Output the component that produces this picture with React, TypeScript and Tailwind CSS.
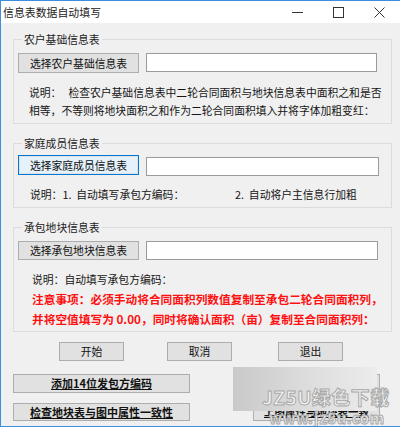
import React from "react";

function Btn({
  children,
  className = "",
}: {
  children: React.ReactNode;
  className?: string;
}) {
  return (
    <div
      className={
        "flex items-center justify-center bg-[#e1e1e1] border border-[#adadad] text-[#111] " +
        className
      }
    >
      {children}
    </div>
  );
}

export default function App() {
  return (
    <div className="w-[400px] h-[429px] bg-white font-['Noto_Sans_CJK_SC',sans-serif] text-[10.8px] text-[#161616] leading-none">
      <div className="relative h-[427px] overflow-hidden bg-[#f0f0f0] border-t border-l border-b border-[#3d8edb]">
        {/* title bar */}
        <div className="flex h-[22px] items-center bg-white">
          <div className="pl-[2px] text-[10.9px] text-[#222]">信息表数据自动填写</div>
          <div className="ml-auto flex h-full">
            <div className="flex w-[41px] items-center justify-center">
              <svg width="11" height="11" viewBox="0 0 11 11">
                <line x1="0" y1="5.5" x2="11" y2="5.5" stroke="#333" strokeWidth="1" />
              </svg>
            </div>
            <div className="flex w-[41px] items-center justify-center">
              <svg width="11" height="11" viewBox="0 0 11 11">
                <rect x="0.5" y="0.5" width="10" height="10" fill="none" stroke="#333" strokeWidth="1" />
              </svg>
            </div>
            <div className="flex w-[41px] items-center justify-center">
              <svg width="11" height="11" viewBox="0 0 11 11">
                <line x1="0.5" y1="0.5" x2="10.5" y2="10.5" stroke="#333" strokeWidth="1" />
                <line x1="10.5" y1="0.5" x2="0.5" y2="10.5" stroke="#333" strokeWidth="1" />
              </svg>
            </div>
          </div>
        </div>

        {/* group 1 */}
        <fieldset className="ml-[12px] mt-[9px] w-[379px] border border-[#dcdcdc] pl-[4px] pb-[4px]">
          <legend className="ml-[4px] h-[14px] px-[2px] leading-[14px] text-[#222]">农户基础信息表</legend>
          <div className="mt-[7px] flex items-start">
            <Btn className="h-[20px] w-[121px]">选择农户基础信息表</Btn>
            <div className="ml-[7px] h-[19px] w-[231px] border border-[#9b9b9b] bg-white" />
          </div>
          <div className="mt-[10px] pl-[11px]">
            <div className="flex h-[18px] items-center whitespace-nowrap">
              <span>说明：</span>
              <span className="ml-[7px]">检查农户基础信息表中二轮合同面积与地块信息表中面积之和是否</span>
            </div>
            <div className="flex h-[18px] items-center whitespace-nowrap">
              相等，不等则将地块面积之和作为二轮合同面积填入并将字体加粗变红：
            </div>
          </div>
        </fieldset>

        {/* group 2 */}
        <fieldset className="ml-[12px] mt-[12px] w-[379px] border border-[#dcdcdc] pl-[4px] pb-[4px]">
          <legend className="ml-[4px] h-[14px] px-[2px] leading-[14px] text-[#222]">家庭成员信息表</legend>
          <div className="mt-[5px] flex items-start">
            <div className="flex h-[20px] w-[121px] items-center justify-center border border-[#0078d7] bg-[#e5f1fb] shadow-[inset_0_0_0_1px_#e1e1e1] text-[#111]">
              选择家庭成员信息表
            </div>
            <div className="ml-[7px] mt-[2px] h-[19px] w-[233px] border border-[#9b9b9b] bg-white" />
          </div>
          <div className="mt-[9px] flex h-[18px] items-center whitespace-nowrap pl-[12px]">
            <span className="w-[205px]">说明：1.&nbsp;&nbsp;自动填写承包方编码：</span>
            <span>2.&nbsp;&nbsp;自动将户主信息行加粗</span>
          </div>
        </fieldset>

        {/* group 3 */}
        <fieldset className="ml-[12px] mt-[12px] w-[379px] border border-[#dcdcdc] pl-[4px] pb-[2px]">
          <legend className="ml-[4px] h-[14px] px-[2px] leading-[14px] text-[#222]">承包地块信息表</legend>
          <div className="mt-[7px] flex items-start">
            <Btn className="h-[19px] w-[121px]">选择承包地块信息表</Btn>
            <div className="ml-[7px] h-[19px] w-[232px] border border-[#9b9b9b] bg-white" />
          </div>
          <div className="mt-[10px] pl-[14px]">
            <div className="flex h-[18px] items-center whitespace-nowrap">说明：自动填写承包方编码：</div>
            <div className="mt-px flex h-[20px] items-center whitespace-nowrap text-[11.7px] font-bold text-[#ff1010]">
              注意事项：必须手动将合同面积列数值复制至承包二轮合同面积列，
            </div>
            <div className="flex h-[20px] items-center whitespace-nowrap text-[11.7px] font-bold text-[#ff1010]">
              并将空值填写为&nbsp;0.00，同时将确认面积（亩）复制至合同面积列：
            </div>
          </div>
        </fieldset>

        {/* action buttons */}
        <div className="mt-[10px] flex">
          <Btn className="ml-[58px] h-[19px] w-[65px]">开始</Btn>
          <Btn className="ml-[43px] h-[19px] w-[65px]">取消</Btn>
          <Btn className="ml-[46px] h-[19px] w-[65px]">退出</Btn>
        </div>

        {/* bottom buttons */}
        <div className="mt-[13px] flex">
          <div className="ml-[12px] flex w-[177px] flex-col gap-[10px]">
            <Btn className="h-[19px] text-[11px] font-bold underline">添加14位发包方编码</Btn>
            <Btn className="h-[18px] text-[11px] font-bold underline">检查地块表与图中属性一致性</Btn>
          </div>
          <div className="ml-[63px] flex w-[127px] flex-col gap-[10px]">
            <Btn className="h-[19px] overflow-hidden text-[10.5px] font-bold underline">检查承包方编码</Btn>
            <Btn className="h-[18px] overflow-hidden whitespace-nowrap text-[10.5px] font-bold underline">上图属性与地块表一致</Btn>
          </div>
        </div>

        {/* watermark overlay */}
        <div className="absolute left-[232px] top-[366px] h-[44px] w-[144px] bg-gradient-to-r from-[#c9c9c9] via-[#dcdcdc] to-[#ececec]" />
        <div className="absolute left-[261px] top-[386px] whitespace-nowrap text-[19px] font-bold leading-none tracking-[0.5px] text-[#f4f4f4] [-webkit-text-stroke:1px_#a8a8a8]">
          JZ5U绿色下载
        </div>
        <div className="absolute left-[268px] top-[409px] whitespace-nowrap text-[15px] font-bold leading-none tracking-[0.5px] text-[#f4f4f4] [-webkit-text-stroke:1px_#a8a8a8]">
          www.jz5u.com
        </div>
      </div>
    </div>
  );
}
